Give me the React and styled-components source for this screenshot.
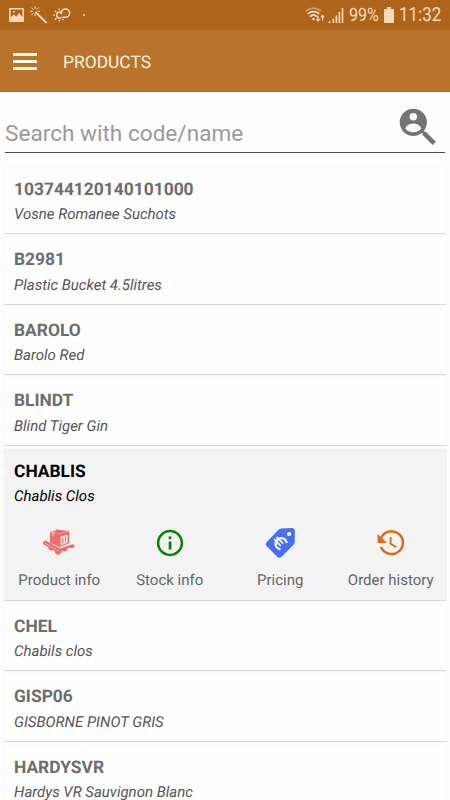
// ProductList.jsx
import React, { useState } from 'react';
import styled, { createGlobalStyle } from 'styled-components';

const products = [
  { code: '103744120140101000', name: 'Vosne Romanee Suchots' },
  { code: 'B2981', name: 'Plastic Bucket 4.5litres' },
  { code: 'BAROLO', name: 'Barolo Red' },
  { code: 'BLINDT', name: 'Blind Tiger Gin' },
  { code: 'CHABLIS', name: 'Chablis Clos' },
  { code: 'CHEL', name: 'Chabils clos' },
  { code: 'GISP06', name: 'GISBORNE PINOT GRIS' },
  { code: 'HARDYSVR', name: 'Hardys VR Sauvignon Blanc' },
];

const PictureIcon = () => (
  <svg width="15" height="14" viewBox="0 0 15 14">
    <path
      fill="currentColor"
      fillRule="evenodd"
      d="M1 0h13a1 1 0 0 1 1 1v12a1 1 0 0 1-1 1H1a1 1 0 0 1-1-1V1a1 1 0 0 1 1-1zM1.6 1.6v8l3.2-3.4 2.4 2.6 3-3.8 3.2 4V1.6zM4 3h1.6v1.6H4z"
    />
  </svg>
);

const WandIcon = () => (
  <svg width="18" height="18" viewBox="0 0 18 18" fill="none" stroke="currentColor">
    <path d="M5.5 6L16.5 17" strokeWidth="1.8" />
    <path d="M5 0v3M0 5.3h2.6M1.4 1.6l2 2M8.8 1.4l-2 2M7.6 5.3H10M1.4 9l2-2M5 7.6V10" strokeWidth="1" />
  </svg>
);

const WeatherIcon = () => (
  <svg width="18" height="14" viewBox="0 0 18 14" fill="none" stroke="currentColor">
    <path d="M8.6 9.3A3 3 0 1 1 9 5.2M7.8 6.2C8.2 2.6 10 1 12.6 1a4.1 4.1 0 0 1 0 8.2H9.4" strokeWidth="1.5" />
    <path d="M6.2 .4v1.8M6.4 11.8v1.8M0 7.2h1.8M2 2.8l1.3 1.3M2 11.8l1.5-1.5M9.5 11l1 1.2" strokeWidth="1.3" />
  </svg>
);

const WifiIcon = () => (
  <svg width="20" height="16" viewBox="0 0 20 16" fill="none" stroke="currentColor">
    <path d="M.8 4.1C4.8.2 12.2.2 16.2 4.1" strokeWidth="1.5" opacity=".5" />
    <path d="M2.8 6.9c3.2-3 8.2-3 11.4 0" strokeWidth="1.7" />
    <path d="M5.1 9.6c2-1.9 4.8-1.9 6.8 0" strokeWidth="1.7" />
    <circle cx="8.5" cy="12" r="1.3" fill="currentColor" stroke="none" />
    <path d="M13 8.8v4.4M17.6 13.4V9" strokeWidth="1.3" />
    <path d="M10.8 12h4.4L13 15zM15.4 10.6h4.4l-2.2-3z" fill="currentColor" stroke="none" />
  </svg>
);

const SignalIcon = () => (
  <svg width="16" height="15" viewBox="0 0 16 15" fill="currentColor">
    <path d="M0 15l2.4-2.4V15zM4.6 10.4h1.6V15H4.6zM7.6 7.4h1.6V15H7.6zM10.6 4h1.6v11h-1.6zM13.7 0h1.6v15h-1.6z" />
  </svg>
);

const BatteryIcon = () => (
  <svg width="10" height="16" viewBox="0 0 10 16" fill="currentColor">
    <path d="M3 0h4v2h2a1 1 0 0 1 1 1v12a1 1 0 0 1-1 1H1a1 1 0 0 1-1-1V3a1 1 0 0 1 1-1h2z" />
  </svg>
);

const SearchPersonIcon = () => (
  <svg width="38" height="38" viewBox="0 0 38 38">
    <circle cx="14.3" cy="14.3" r="13.6" fill="#747474" />
    <circle cx="14.3" cy="8.8" r="3.7" fill="#fefefe" />
    <path d="M6.3 20.4c2.4-6.6 13.6-6.6 16 0-3.8 5.1-12.2 5.1-16 0z" fill="#fefefe" />
    <path d="M22.5 22.5l3.4 3.4" stroke="#747474" strokeWidth="2.4" />
    <path d="M24.7 24.9l10.6 10.5" stroke="#747474" strokeWidth="4.6" />
  </svg>
);

const PalletIcon = () => (
  <svg width="32" height="27" viewBox="0 0 32 27">
    <path
      d="M0 12.8l2.8-1.2 13.8 8L29.5 15.2l2 .9v2l-2.6 1.2-1.8-.7-3 1.2v1.7l-2.2 1-1.8-.8-2.4 1.2.2 1.5-2.7 1.6-3-1.7v-1.8l-2.6-1.5-1.6.8-2.5-1.5v-1.9L3 16.8l-3-1.8z"
      fill="#ef6b6c"
    />
    <path d="M5.6 11.8l10.6 6.4" stroke="#f3f3f3" strokeWidth="1" fill="none" />
    <path d="M1.6 13.9l13.8 8.2" stroke="#f8cfcf" strokeWidth=".7" fill="none" />
    <path d="M7 3.1L13.2.6l13 1.4v12.2l-10 3.9L7 13.6z" fill="#ef6b6c" />
    <path d="M7 3.1l9.2 1.7L26.2 2" stroke="#f4b1b0" strokeWidth=".8" fill="none" />
    <path d="M12.8 1l-3 1.9v4.4" stroke="#f4cccc" strokeWidth="1.1" fill="none" />
    <path d="M17.6 7.5l7-1.7v8l-7 2.5z" fill="#f6e6e5" />
    <path
      d="M19.7 8.4v5.6M22.6 7.6v5.6"
      stroke="#ef6b6c"
      strokeWidth="1"
      fill="none"
    />
  </svg>
);

const InfoIcon = () => (
  <svg width="28" height="28" viewBox="0 0 28 28">
    <circle cx="14" cy="14" r="11.9" fill="none" stroke="#078307" strokeWidth="2.5" />
    <path d="M12.7 7.6h2.7v2.7h-2.7zM12.7 12.6h2.7v8h-2.7z" fill="#078307" />
  </svg>
);

const PriceTagIcon = () => (
  <svg width="30" height="30" viewBox="-0.7 0 30 30">
    <path
      d="M15.5.4L26 .1Q29.2.1 29.2 4L29 14.2Q28.9 15.4 28 16.4L16 28.7Q13.7 30.8 11.5 28.7L1.1 18.3Q-.8 16.3 1.1 14L12.8 1.7Q14 .5 15.5.4z"
      fill="#4770f4"
    />
    <circle cx="23.4" cy="6" r="2.1" fill="#fff" />
    <g transform="rotate(45 14.5 15)" fill="none" stroke="#fff">
      <path d="M19.1 10.4a5.6 5.6 0 1 0 0 9" strokeWidth="2.3" />
      <path d="M7.5 13.3h9.4M7.5 16.6h9.4" strokeWidth="1.6" />
    </g>
  </svg>
);

const HistoryIcon = () => (
  <svg width="28" height="28" viewBox="0 0 28 28">
    <path d="M3.9 9.5A11.4 11.4 0 1 1 4 18" fill="none" stroke="#de6b13" strokeWidth="2.4" />
    <path d="M.6 5v9h9.4z" fill="#de6b13" />
    <path d="M13.6 8v6.8l5.7 3.5" fill="none" stroke="#de6b13" strokeWidth="1.9" />
  </svg>
);

const actions = [
  { label: 'Product info', icon: PalletIcon },
  { label: 'Stock info', icon: InfoIcon },
  { label: 'Pricing', icon: PriceTagIcon },
  { label: 'Order history', icon: HistoryIcon },
];

const App = () => {
  const [keyword, setKeyword] = useState('');
  const [selected, setSelected] = useState('CHABLIS');

  const visible = products.filter((item) =>
    `${item.code} ${item.name}`.toLowerCase().includes(keyword.toLowerCase())
  );

  return (
    <Screen>
      <GlobalStyle />
      <StatusBar>
        <Notifications>
          <PictureIcon />
          <WandIcon />
          <WeatherIcon />
          <Dot />
        </Notifications>
        <SystemInfo>
          <WifiIcon />
          <SignalIcon />
          <Percent>99%</Percent>
          <BatteryIcon />
          <Clock>11:32</Clock>
        </SystemInfo>
      </StatusBar>

      <AppBar>
        <MenuButton aria-label="Menu">
          <MenuLine />
          <MenuLine />
          <MenuLine />
        </MenuButton>
        <Title>PRODUCTS</Title>
      </AppBar>

      <SearchRow>
        <SearchInput
          placeholder="Search with code/name"
          value={keyword}
          onChange={(e) => setKeyword(e.target.value)}
        />
        <SearchPersonIcon />
      </SearchRow>

      <List>
        {visible.map((item) => {
          const active = item.code === selected;
          return (
            <Card key={item.code} $active={active} onClick={() => setSelected(item.code)}>
              <Code>{item.code}</Code>
              <Name $active={active}>{item.name}</Name>
              {active && (
                <Actions>
                  {actions.map(({ label, icon: Icon }) => (
                    <Action key={label}>
                      <IconSlot>
                        <Icon />
                      </IconSlot>
                      {label}
                    </Action>
                  ))}
                </Actions>
              )}
            </Card>
          );
        })}
      </List>
    </Screen>
  );
};

export default App;

// styled components
const GlobalStyle = createGlobalStyle`
  body {
    margin: 0;
    background: #fefefe;
    font-family: Roboto, sans-serif;
    text-rendering: geometricPrecision;
  }
`;

const Screen = styled.div`
  display: flex;
  flex-direction: column;
  height: 800px;
  overflow: hidden;
  background: #fefefe;
`;

const StatusBar = styled.div`
  display: flex;
  flex: none;
  align-items: center;
  justify-content: space-between;
  height: 30px;
  padding: 0 10px 0 9px;
  box-sizing: border-box;
  background: #ae641b;
  color: #f6dcbd;
`;

const Notifications = styled.div`
  display: flex;
  align-items: center;
  gap: 5.5px;
`;

const Dot = styled.span`
  width: 2px;
  height: 2px;
  margin-left: 6px;
  border-radius: 50%;
  background: currentColor;
`;

const SystemInfo = styled.div`
  display: flex;
  align-items: center;
  gap: 3px;
`;

const Percent = styled.span`
  width: 30px;
  margin: 0 2px 0 2px;
  font-size: 18.5px;
  line-height: 32px;
  transform: scaleX(0.87);
  transform-origin: left;
`;

const Clock = styled.span`
  width: 41px;
  margin-left: 2px;
  font-size: 19.5px;
  line-height: 32px;
  white-space: nowrap;
  transform: scaleX(0.87);
  transform-origin: left;
`;

const AppBar = styled.header`
  display: flex;
  flex: none;
  align-items: center;
  height: 62px;
  padding-left: 13px;
  background: #b9732d;
`;

const MenuButton = styled.button`
  display: flex;
  flex-direction: column;
  gap: 4px;
  width: 24px;
  padding: 0;
  border: none;
  background: none;
`;

const MenuLine = styled.span`
  height: 3px;
  background: #fff8e4;
`;

const Title = styled.h1`
  margin: 3px 0 0 26px;
  color: #fff3dc;
  font-size: 17.4px;
  font-weight: 400;
  line-height: 24px;
`;

const SearchRow = styled.div`
  display: flex;
  flex: none;
  align-items: flex-end;
  height: 61px;
  margin: 0 5px;
  padding: 0 8px 6px 0;
  box-sizing: border-box;
  border-bottom: 1px solid #4c4c4c;
`;

const SearchInput = styled.input`
  flex: 1;
  min-width: 0;
  height: 26px;
  padding: 0;
  border: none;
  outline: none;
  background: none;
  color: #555;
  font-family: inherit;
  font-size: 22.6px;

  &::placeholder {
    color: #9a9a9a;
  }
`;

const List = styled.div`
  display: flex;
  flex-direction: column;
  gap: 4px;
  padding: 14px 4px 0;
`;

const Card = styled.div`
  flex: none;
  height: ${(props) => (props.$active ? '151.2px' : '66.4px')};
  padding-top: 12px;
  box-sizing: border-box;
  background: ${(props) => (props.$active ? '#f3f3f3' : '#fefefe')};
  color: ${(props) => (props.$active ? '#000' : '#6d6d6d')};
  box-shadow: 0 1px 1px rgba(0, 0, 0, 0.13), 0 0 1px rgba(0, 0, 0, 0.1);
`;

const Code = styled.div`
  padding-left: 10px;
  font-size: 17.4px;
  font-weight: 700;
  line-height: 22px;
`;

const Name = styled.div`
  margin-top: 4.4px;
  padding-left: 10px;
  color: ${(props) => (props.$active ? '#000' : '#555')};
  font-size: 15px;
  font-style: italic;
  line-height: 18px;
`;

const Actions = styled.div`
  display: grid;
  grid-template-columns: repeat(4, 1fr);
  margin-top: 22px;
`;

const Action = styled.div`
  display: flex;
  flex-direction: column;
  align-items: center;
  color: #666;
  font-size: 15px;
  line-height: 22px;
  white-space: nowrap;
`;

const IconSlot = styled.div`
  display: flex;
  align-items: center;
  justify-content: center;
  height: 32px;
  margin-bottom: 10px;
`;
